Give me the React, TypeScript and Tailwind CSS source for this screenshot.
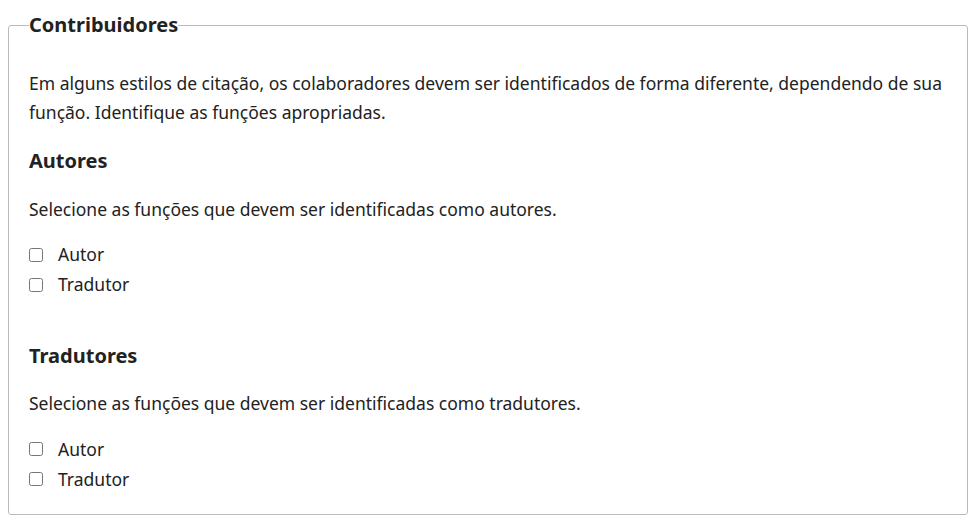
import React from 'react';

const groups = [
  {
    title: 'Autores',
    hint: 'Selecione as funções que devem ser identificadas como autores.',
    roles: ['Autor', 'Tradutor'],
  },
  {
    title: 'Tradutores',
    hint: 'Selecione as funções que devem ser identificadas como tradutores.',
    roles: ['Autor', 'Tradutor'],
  },
];

const App = () => {
  return (
    <div className="bg-white pt-[11px] pb-[10px] text-[#222] font-['Noto_Sans',sans-serif]">
      <fieldset className="ml-2 mr-3 rounded-[3px] border border-[#bbb] px-5 pb-[20px]">
        <legend className="px-0 text-[20px] font-bold leading-[28px]">Contribuidores</legend>
        <p className="mt-[30px] text-[17.5px] leading-[29px]">
          Em alguns estilos de citação, os colaboradores devem ser identificados de forma diferente, dependendo de sua
          função. Identifique as funções apropriadas.
        </p>
        {groups.map((group, i) => (
          <div key={group.title} className={i === 0 ? 'mt-[20px]' : 'mt-[42px]'}>
            <h3 className="text-[20px] font-bold leading-[27px]">{group.title}</h3>
            <p className="mt-[20.5px] text-[17.5px] leading-[29px]">{group.hint}</p>
            <div className="mt-[16px]">
              {group.roles.map((role) => (
                <label key={role} className="flex h-[30px] items-center text-[17.5px]">
                  <input type="checkbox" className="m-0 mr-[15px] h-[14px] w-[14px]" />
                  <span>{role}</span>
                </label>
              ))}
            </div>
          </div>
        ))}
      </fieldset>
    </div>
  );
};

export default App;
